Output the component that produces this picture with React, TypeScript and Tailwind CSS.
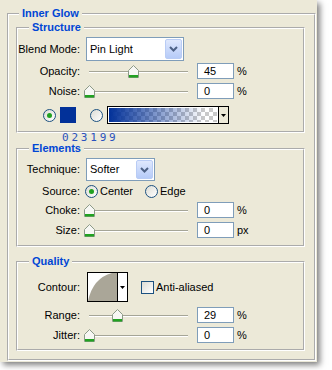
import type { ReactNode } from 'react';

const groove = 'border-2 border-white [border-style:groove]';

function Group({ title, className, children }: { title: string; className?: string; children?: ReactNode }) {
  return (
    <fieldset className={`ml-[7px] w-[289px] ${groove} ${className ?? ''}`}>
      <legend className="ml-[11px] px-[3px] text-[11px] font-bold leading-[13px] text-[#0046d5]">{title}</legend>
      {children}
    </fieldset>
  );
}

function Thumb({ left }: { left: number }) {
  return (
    <svg width="11" height="13" viewBox="0 0 11 13" className="absolute top-[3px]" style={{ left }}>
      <path d="M0.5 5.5 L5.5 0.5 L10.5 5.5 V12.5 H0.5 Z" fill="#f7f7f4" stroke="#8c9a88" />
      <rect x="1" y="10" width="9" height="2.5" fill="#21a121" />
    </svg>
  );
}

function SliderRow({ label, value, pct, unit, className }: { label: string; value: string; pct: number; unit: string; className?: string }) {
  return (
    <div className={`flex h-[18px] items-center ${className ?? ''}`}>
      <span className="w-[62px] text-right">{label}</span>
      <div className="relative ml-[5px] h-full w-[108px]">
        <div className="absolute left-[4px] top-[9px] h-[2px] w-[99px] border-t border-[#a5a597] bg-white" />
        <Thumb left={4 + pct * 99 - 5.5} />
      </div>
      <div className="ml-[4px] h-[16px] w-[37px] border border-[#7f9db9] bg-white pl-[6px] leading-[14px]">{value}</div>
      <span className="ml-[3px]">{unit}</span>
    </div>
  );
}

function Select({ value, className }: { value: string; className?: string }) {
  return (
    <div className={`flex items-center border border-[#7f9db9] bg-white p-[1px] ${className ?? ''}`}>
      <span className="flex-1 pl-[2px]">{value}</span>
      <span className="flex h-full w-[17px] items-center justify-center rounded-[2px] border border-[#b9ccf5] bg-gradient-to-b from-[#dfe8fd] to-[#b6cbf8]">
        <svg width="9" height="6" viewBox="0 0 9 6">
          <path d="M1 1 L4.5 4.5 L8 1" fill="none" stroke="#4d6185" strokeWidth="2" />
        </svg>
      </span>
    </div>
  );
}

function Radio({ checked, className }: { checked?: boolean; className?: string }) {
  return (
    <span className={`flex h-[13px] w-[13px] shrink-0 items-center justify-center rounded-full border border-[#1c5180] bg-gradient-to-br from-[#dcdcd5] to-white ${className ?? ''}`}>
      {checked && <span className="h-[5px] w-[5px] rounded-full bg-[#21a121]" />}
    </span>
  );
}

export default function App() {
  return (
    <div className="min-h-screen bg-white font-['Liberation_Sans',Arial,sans-serif] text-[11px] text-black">
      <div className="h-[362px] w-[317px] bg-[#ece9d8] pt-[7px] shadow-[3px_3px_6px_rgba(0,0,0,0.5)]">
        <fieldset className={`ml-[7px] h-[354px] w-[309px] ${groove}`}>
          <legend className="ml-[10px] px-[3px] text-[11px] font-bold leading-[13px] text-[#0046d5]">Inner Glow</legend>

          {/* Structure */}
          <Group title="Structure" className="mt-[1px] h-[112px]">
            <div className="mt-[3px] flex items-center">
              <span className="w-[62px] text-right">Blend Mode:</span>
              <Select value="Pin Light" className="ml-[6px] h-[24px] w-[98px]" />
            </div>
            <SliderRow label="Opacity:" value="45" pct={0.45} unit="%" className="mt-[1px]" />
            <SliderRow label="Noise:" value="0" pct={0} unit="%" className="mt-[2px]" />
            <div className="mt-[6px] flex h-[18px] items-center">
              <Radio checked className="ml-[25px]" />
              <div className="ml-[4px] h-[16px] w-[16px] bg-[#023199]" />
              <Radio className="ml-[14px]" />
              <div className="ml-[4px] flex h-[18px] w-[122px] border border-black bg-white">
                <div className="m-[1px] flex-1 bg-[linear-gradient(to_right,#023199,rgba(2,49,153,0)_88%),repeating-conic-gradient(#c9c9c9_0_25%,#ffffff_0_50%)] bg-[length:100%_100%,8px_8px]" />
                <div className="flex w-[10px] items-center justify-center border-l border-black bg-[#ece9d8]">
                  <svg width="5" height="3" viewBox="0 0 5 3">
                    <path d="M0 0 H5 L2.5 3 Z" fill="#000" />
                  </svg>
                </div>
              </div>
            </div>
          </Group>

          <div className="h-[10px] pl-[53px]">
            <div className="-mt-[1px] font-['DejaVu_Sans_Mono',monospace] text-[11px] leading-[11px] tracking-[2.8px] text-[#2a52be]">023199</div>
          </div>

          {/* Elements */}
          <Group title="Elements" className="h-[105px]">
            <div className="mt-[3px] flex items-center">
              <span className="w-[62px] text-right">Technique:</span>
              <Select value="Softer" className="ml-[6px] h-[23px] w-[69px]" />
            </div>
            <div className="mt-[3px] flex h-[14px] items-center">
              <span className="w-[62px] text-right">Source:</span>
              <span className="ml-[5px] flex w-[60px] items-center">
                <Radio checked />
                <span className="ml-[2px]">Center</span>
              </span>
              <span className="flex items-center">
                <Radio />
                <span className="ml-[2px]">Edge</span>
              </span>
            </div>
            <SliderRow label="Choke:" value="0" pct={0} unit="%" className="mt-[3px]" />
            <SliderRow label="Size:" value="0" pct={0} unit="px" className="mt-[2px]" />
          </Group>

          {/* Quality */}
          <Group title="Quality" className="mt-[8px] h-[96px]">
            <div className="mt-[4px] flex h-[30px] items-center">
              <span className="w-[62px] text-right">Contour:</span>
              <div className="ml-[7px] flex h-[30px] w-[41px] border border-black bg-white">
                <svg width="29" height="28" viewBox="0 0 29 28" className="block">
                  <path d="M0 28 Q5 5 24 0 L29 0 L29 28 Z" fill="#aaa698" />
                </svg>
                <div className="flex flex-1 items-center justify-center border-l border-black">
                  <svg width="5" height="3" viewBox="0 0 5 3">
                    <path d="M0 0 H5 L2.5 3 Z" fill="#000" />
                  </svg>
                </div>
              </div>
              <span className="ml-[13px] h-[13px] w-[13px] border border-[#1c5180] bg-gradient-to-br from-[#dcdcd5] to-white" />
              <span className="ml-[2px]">Anti-aliased</span>
            </div>
            <SliderRow label="Range:" value="29" pct={0.29} unit="%" className="mt-[4px]" />
            <SliderRow label="Jitter:" value="0" pct={0} unit="%" className="mt-[2px]" />
          </Group>
        </fieldset>
      </div>
    </div>
  );
}
